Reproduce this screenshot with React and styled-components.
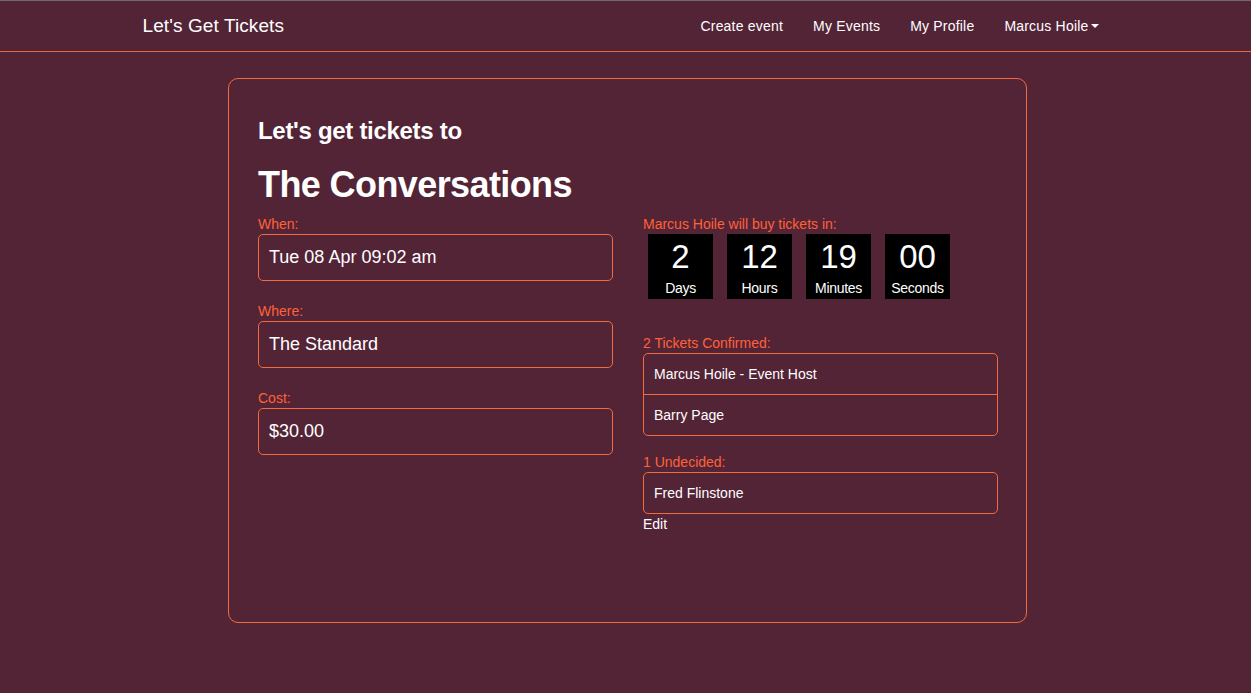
import React from 'react';
import styled, { createGlobalStyle } from 'styled-components';

const GlobalStyle = createGlobalStyle`
  html, body {
    margin: 0;
    padding: 0;
    background: #532436;
    font-family: "Liberation Sans", Arial, Helvetica, sans-serif;
    color: #fff;
  }
`;

// Верхняя панель навигации
const Navbar = styled.nav`
  border-top: 1px solid #6b6b6b;
  border-bottom: 1px solid #e8693f;
  height: 50px;
`;

const NavContainer = styled.div`
  width: 976px;
  margin: 0 auto;
  height: 100%;
  display: flex;
  align-items: center;
  justify-content: space-between;
`;

const Brand = styled.a`
  padding-left: 5px;
  font-size: 19px;
  color: #fff;
  letter-spacing: 0.1px;
`;

const NavList = styled.ul`
  display: flex;
  list-style: none;
  margin: 0;
  padding: 0;
`;

const NavItem = styled.li`
  padding: 0 15px;
  font-size: 14px;
  letter-spacing: 0.2px;
  color: #fff;
  display: flex;
  align-items: center;
`;

const Caret = styled.span`
  display: inline-block;
  width: 0;
  height: 0;
  margin-left: 2px;
  border-top: 4px solid #fff;
  border-left: 4px solid transparent;
  border-right: 4px solid transparent;
`;

// Карточка события
const Card = styled.main`
  width: 739px;
  margin: 26px auto 0;
  border: 1px solid #f26a3d;
  border-radius: 10px;
  padding: 27px 29px 29px 29px;
  min-height: 487px;
  box-sizing: content-box;
  position: relative;
  left: 2px;
`;

const Lead = styled.h3`
  margin: 12px 0 0;
  font-size: 24px;
  font-weight: bold;
  line-height: 1.1;
  letter-spacing: -0.3px;
`;

const Title = styled.h1`
  margin: 21px 0 0;
  font-size: 36px;
  font-weight: bold;
  line-height: 1.1;
  letter-spacing: -0.6px;
`;

const Columns = styled.div`
  display: grid;
  grid-template-columns: 355px 355px;
  column-gap: 30px;
  margin-top: 9px;
`;

const Column = styled.div`
  display: flex;
  flex-direction: column;
`;

const Label = styled.div`
  color: #ff6138;
  font-size: 14px;
  line-height: 20px;
  margin-top: ${(p) => p.$top || 0}px;
`;

const Field = styled.div`
  height: 45px;
  border: 1px solid #f26a3d;
  border-radius: 5px;
  padding: 0 10px;
  display: flex;
  align-items: center;
  font-size: 18px;
`;

const Countdown = styled.div`
  display: flex;
  gap: 14px;
  padding-left: 5px;
`;

const TimeBox = styled.div`
  width: 65px;
  height: 65px;
  background: #000;
  display: flex;
  flex-direction: column;
  align-items: center;
`;

const TimeValue = styled.div`
  font-size: 33px;
  line-height: 33px;
  margin-top: 6px;
`;

const TimeUnit = styled.div`
  font-size: 14px;
  line-height: 16px;
  margin-top: 7px;
  letter-spacing: -0.3px;
`;

const ListGroup = styled.div`
  border: 1px solid #f26a3d;
  border-radius: 5px;
`;

const ListItem = styled.div`
  height: 40px;
  padding: 0 10px;
  display: flex;
  align-items: center;
  font-size: 14px;
  & + & {
    border-top: 1px solid #f26a3d;
  }
`;

const EditLink = styled.a`
  font-size: 14px;
  color: #fff;
  line-height: 20px;
`;

const units = [
  { value: '2', unit: 'Days' },
  { value: '12', unit: 'Hours' },
  { value: '19', unit: 'Minutes' },
  { value: '00', unit: 'Seconds' },
];

const App = () => (
  <>
    <GlobalStyle />
    <Navbar>
      <NavContainer>
        <Brand>Let's Get Tickets</Brand>
        <NavList>
          <NavItem>Create event</NavItem>
          <NavItem>My Events</NavItem>
          <NavItem>My Profile</NavItem>
          <NavItem>
            Marcus Hoile
            <Caret />
          </NavItem>
        </NavList>
      </NavContainer>
    </Navbar>

    <Card>
      <Lead>Let's get tickets to</Lead>
      <Title>The Conversations</Title>
      <Columns>
        <Column>
          <Label>When:</Label>
          <Field>Tue 08 Apr 09:02 am</Field>
          <Label $top={20}>Where:</Label>
          <Field>The Standard</Field>
          <Label $top={20}>Cost:</Label>
          <Field>$30.00</Field>
        </Column>
        <Column>
          <Label>Marcus Hoile will buy tickets in:</Label>
          <Countdown>
            {units.map((u) => (
              <TimeBox key={u.unit}>
                <TimeValue>{u.value}</TimeValue>
                <TimeUnit>{u.unit}</TimeUnit>
              </TimeBox>
            ))}
          </Countdown>
          <Label $top={34}>2 Tickets Confirmed:</Label>
          <ListGroup>
            <ListItem>Marcus Hoile - Event Host</ListItem>
            <ListItem>Barry Page</ListItem>
          </ListGroup>
          <Label $top={16}>1 Undecided:</Label>
          <ListGroup>
            <ListItem>Fred Flinstone</ListItem>
          </ListGroup>
          <EditLink>Edit</EditLink>
        </Column>
      </Columns>
    </Card>
  </>
);

export default App;
